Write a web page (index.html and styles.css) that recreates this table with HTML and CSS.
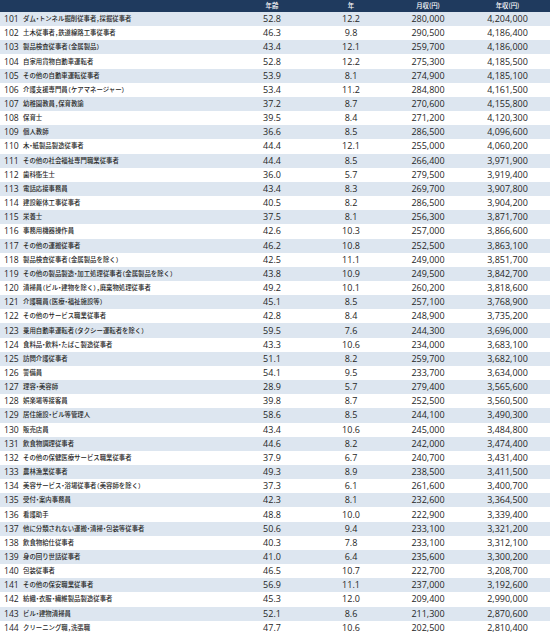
FILE: index.html
```html
<!DOCTYPE html>
<html lang="ja">
<head>
<meta charset="utf-8">
<link rel="stylesheet" href="styles.css">
</head>
<body>
<table class="tbl">
<colgroup><col class="c-no"><col class="c-name"><col class="c-age"><col class="c-yr"><col class="c-mon"><col class="c-ann"></colgroup>
<thead><tr><th></th><th></th><th>年齢</th><th>年</th><th>月収(円)</th><th>年収(円)</th></tr></thead>
<tbody>
<tr><td class="no">101</td><td class="nm">ダム・トンネル掘削従事者，採掘従事者</td><td>52.8</td><td>12.2</td><td>280,000</td><td>4,204,000</td></tr>
<tr><td class="no">102</td><td class="nm">土木従事者，鉄道線路工事従事者</td><td>46.3</td><td>9.8</td><td>290,500</td><td>4,186,400</td></tr>
<tr><td class="no">103</td><td class="nm">製品検査従事者（金属製品）</td><td>43.4</td><td>12.1</td><td>259,700</td><td>4,186,000</td></tr>
<tr><td class="no">104</td><td class="nm">自家用貨物自動車運転者</td><td>52.8</td><td>12.2</td><td>275,300</td><td>4,185,500</td></tr>
<tr><td class="no">105</td><td class="nm">その他の自動車運転従事者</td><td>53.9</td><td>8.1</td><td>274,900</td><td>4,185,100</td></tr>
<tr><td class="no">106</td><td class="nm">介護支援専門員（ケアマネージャー）</td><td>53.4</td><td>11.2</td><td>284,800</td><td>4,161,500</td></tr>
<tr><td class="no">107</td><td class="nm">幼稚園教員，保育教諭</td><td>37.2</td><td>8.7</td><td>270,600</td><td>4,155,800</td></tr>
<tr><td class="no">108</td><td class="nm">保育士</td><td>39.5</td><td>8.4</td><td>271,200</td><td>4,120,300</td></tr>
<tr><td class="no">109</td><td class="nm">個人教師</td><td>36.6</td><td>8.5</td><td>286,500</td><td>4,096,600</td></tr>
<tr><td class="no">110</td><td class="nm">木・紙製品製造従事者</td><td>44.4</td><td>12.1</td><td>255,000</td><td>4,060,200</td></tr>
<tr><td class="no">111</td><td class="nm">その他の社会福祉専門職業従事者</td><td>44.4</td><td>8.5</td><td>266,400</td><td>3,971,900</td></tr>
<tr><td class="no">112</td><td class="nm">歯科衛生士</td><td>36.0</td><td>5.7</td><td>279,500</td><td>3,919,400</td></tr>
<tr><td class="no">113</td><td class="nm">電話応接事務員</td><td>43.4</td><td>8.3</td><td>269,700</td><td>3,907,800</td></tr>
<tr><td class="no">114</td><td class="nm">建設躯体工事従事者</td><td>40.5</td><td>8.2</td><td>286,500</td><td>3,904,200</td></tr>
<tr><td class="no">115</td><td class="nm">栄養士</td><td>37.5</td><td>8.1</td><td>256,300</td><td>3,871,700</td></tr>
<tr><td class="no">116</td><td class="nm">事務用機器操作員</td><td>42.6</td><td>10.3</td><td>257,000</td><td>3,866,600</td></tr>
<tr><td class="no">117</td><td class="nm">その他の運搬従事者</td><td>46.2</td><td>10.8</td><td>252,500</td><td>3,863,100</td></tr>
<tr><td class="no">118</td><td class="nm">製品検査従事者（金属製品を除く）</td><td>42.5</td><td>11.1</td><td>249,000</td><td>3,851,700</td></tr>
<tr><td class="no">119</td><td class="nm">その他の製品製造・加工処理従事者（金属製品を除く）</td><td>43.8</td><td>10.9</td><td>249,500</td><td>3,842,700</td></tr>
<tr><td class="no">120</td><td class="nm">清掃員（ビル・建物を除く），廃棄物処理従事者</td><td>49.2</td><td>10.1</td><td>260,200</td><td>3,818,600</td></tr>
<tr><td class="no">121</td><td class="nm">介護職員（医療・福祉施設等）</td><td>45.1</td><td>8.5</td><td>257,100</td><td>3,768,900</td></tr>
<tr><td class="no">122</td><td class="nm">その他のサービス職業従事者</td><td>42.8</td><td>8.4</td><td>248,900</td><td>3,735,200</td></tr>
<tr><td class="no">123</td><td class="nm">乗用自動車運転者（タクシー運転者を除く）</td><td>59.5</td><td>7.6</td><td>244,300</td><td>3,696,000</td></tr>
<tr><td class="no">124</td><td class="nm">食料品・飲料・たばこ製造従事者</td><td>43.3</td><td>10.6</td><td>234,000</td><td>3,683,100</td></tr>
<tr><td class="no">125</td><td class="nm">訪問介護従事者</td><td>51.1</td><td>8.2</td><td>259,700</td><td>3,682,100</td></tr>
<tr><td class="no">126</td><td class="nm">警備員</td><td>54.1</td><td>9.5</td><td>233,700</td><td>3,634,000</td></tr>
<tr><td class="no">127</td><td class="nm">理容・美容師</td><td>28.9</td><td>5.7</td><td>279,400</td><td>3,565,600</td></tr>
<tr><td class="no">128</td><td class="nm">娯楽場等接客員</td><td>39.8</td><td>8.7</td><td>252,500</td><td>3,560,500</td></tr>
<tr><td class="no">129</td><td class="nm">居住施設・ビル等管理人</td><td>58.6</td><td>8.5</td><td>244,100</td><td>3,490,300</td></tr>
<tr><td class="no">130</td><td class="nm">販売店員</td><td>43.4</td><td>10.6</td><td>245,000</td><td>3,484,800</td></tr>
<tr><td class="no">131</td><td class="nm">飲食物調理従事者</td><td>44.6</td><td>8.2</td><td>242,000</td><td>3,474,400</td></tr>
<tr><td class="no">132</td><td class="nm">その他の保健医療サービス職業従事者</td><td>37.9</td><td>6.7</td><td>240,700</td><td>3,431,400</td></tr>
<tr><td class="no">133</td><td class="nm">農林漁業従事者</td><td>49.3</td><td>8.9</td><td>238,500</td><td>3,411,500</td></tr>
<tr><td class="no">134</td><td class="nm">美容サービス・浴場従事者（美容師を除く）</td><td>37.3</td><td>6.1</td><td>261,600</td><td>3,400,700</td></tr>
<tr><td class="no">135</td><td class="nm">受付・案内事務員</td><td>42.3</td><td>8.1</td><td>232,600</td><td>3,364,500</td></tr>
<tr><td class="no">136</td><td class="nm">看護助手</td><td>48.8</td><td>10.0</td><td>222,900</td><td>3,339,400</td></tr>
<tr><td class="no">137</td><td class="nm">他に分類されない運搬・清掃・包装等従事者</td><td>50.6</td><td>9.4</td><td>233,100</td><td>3,321,200</td></tr>
<tr><td class="no">138</td><td class="nm">飲食物給仕従事者</td><td>40.3</td><td>7.8</td><td>233,100</td><td>3,312,100</td></tr>
<tr><td class="no">139</td><td class="nm">身の回り世話従事者</td><td>41.0</td><td>6.4</td><td>235,600</td><td>3,300,200</td></tr>
<tr><td class="no">140</td><td class="nm">包装従事者</td><td>46.5</td><td>10.7</td><td>222,700</td><td>3,208,700</td></tr>
<tr><td class="no">141</td><td class="nm">その他の保安職業従事者</td><td>56.9</td><td>11.1</td><td>237,000</td><td>3,192,600</td></tr>
<tr><td class="no">142</td><td class="nm">紡織・衣服・繊維製品製造従事者</td><td>45.3</td><td>12.0</td><td>209,400</td><td>2,990,000</td></tr>
<tr><td class="no">143</td><td class="nm">ビル・建物清掃員</td><td>52.1</td><td>8.6</td><td>211,300</td><td>2,870,600</td></tr>
<tr><td class="no">144</td><td class="nm">クリーニング職，洗張職</td><td>47.7</td><td>10.6</td><td>202,500</td><td>2,810,400</td></tr>
</tbody>
</table>
</body>
</html>
```
FILE: styles.css
```css
html, body {
  margin: 0;
  padding: 0;
  background: #ffffff;
}
.tbl {
  width: 550px;
  table-layout: fixed;
  border-collapse: collapse;
  border-spacing: 0;
  font-family: "Open Sans", "Noto Sans CJK JP", sans-serif;
  color: #262626;
}
.c-no { width: 22px; }
.c-name { width: 211px; }
.c-age { width: 78px; }
.c-yr { width: 80px; }
.c-mon { width: 74px; }
.c-ann { width: 85px; }
.tbl th {
  height: 12px;
  padding: 0;
  background: #1f3a5e;
  color: #ffffff;
  font-family: "Noto Sans CJK JP", sans-serif;
  font-weight: 500;
  font-size: 6.4px;
  line-height: 12px;
  text-align: center;
  font-feature-settings: "halt";
}
.tbl td {
  height: 14.16px;
  padding: 0;
  font-size: 9px;
  line-height: 14px;
  text-align: center;
  white-space: nowrap;
  overflow: hidden;
}
.tbl tbody tr:nth-child(odd) td {
  background: #dde6f0;
}
.tbl td.no {
  text-align: left;
  padding-left: 4px;
  font-size: 8.6px;
}
.tbl td.nm {
  text-align: left;
  padding-left: 1px;
  font-family: "Noto Sans CJK JP", sans-serif;
  font-weight: 500;
  font-size: 6.4px;
  font-feature-settings: "halt";
}
```
